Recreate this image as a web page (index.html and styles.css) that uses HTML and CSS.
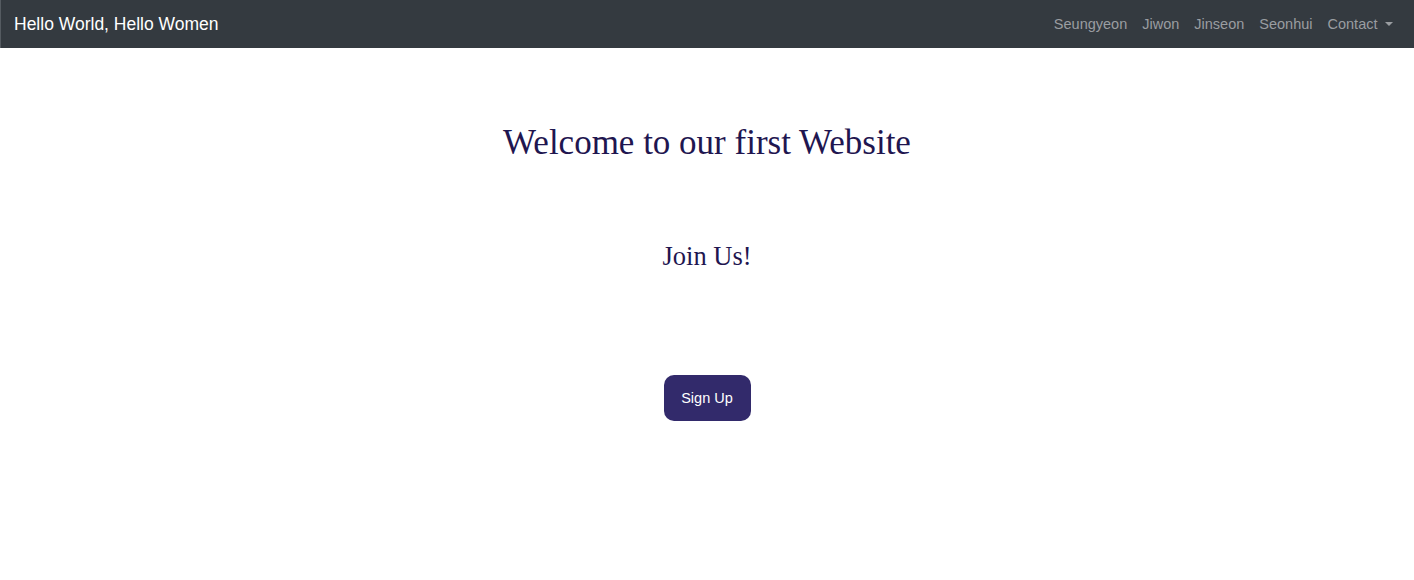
FILE: index.html
```html
<!DOCTYPE html>
<html lang="en">
<head>
<meta charset="utf-8">
<title>Hello World, Hello Women</title>
<link rel="stylesheet" href="styles.css">
</head>
<body>
<nav class="navbar">
  <a class="brand" href="#">Hello World, Hello Women</a>
  <ul class="nav">
    <li><a class="nav-link" href="#">Seungyeon</a></li>
    <li><a class="nav-link" href="#">Jiwon</a></li>
    <li><a class="nav-link" href="#">Jinseon</a></li>
    <li><a class="nav-link" href="#">Seonhui</a></li>
    <li><a class="nav-link dropdown" href="#">Contact<span class="caret"></span></a></li>
  </ul>
</nav>
<main class="hero">
  <h1 class="title">Welcome to our first Website</h1>
  <h2 class="subtitle">Join Us!</h2>
  <button class="btn">Sign Up</button>
</main>
</body>
</html>
```
FILE: styles.css
```css
* { box-sizing: border-box; }
html, body { margin: 0; padding: 0; background: #fff; }
body { font-family: "Liberation Sans", Arial, sans-serif; }
.navbar {
  height: 48px;
  background: #343a40;
  border-left: 1px solid #555b61;
  display: flex;
  align-items: center;
  justify-content: space-between;
  padding: 0 14px 0 13px;
}
.brand {
  color: #fff;
  text-decoration: none;
  font-size: 17.5px;
}
.nav {
  list-style: none;
  margin: 0;
  padding: 0;
  display: flex;
}
.nav-link {
  display: block;
  color: #9a9da1;
  text-decoration: none;
  font-size: 14.5px;
  padding: 8px 7.5px;
}
.caret {
  display: inline-block;
  margin-left: 7px;
  vertical-align: 3px;
  border-top: 4.5px solid #9a9da1;
  border-left: 4.5px solid transparent;
  border-right: 4.5px solid transparent;
}
.hero {
  display: flex;
  flex-direction: column;
  align-items: center;
}
.title {
  margin: 75px 0 0;
  font-family: "Liberation Serif", "Times New Roman", serif;
  font-weight: 400;
  font-size: 35px;
  color: #1f1650;
}
.subtitle {
  margin: 78px 0 0;
  font-family: "Liberation Serif", "Times New Roman", serif;
  font-weight: 400;
  font-size: 26.5px;
  color: #1f1650;
}
.btn {
  margin-top: 103px;
  width: 87px;
  height: 46px;
  border: none;
  border-radius: 10px;
  background: #322a6b;
  color: #fff;
  font-family: "Liberation Sans", Arial, sans-serif;
  font-size: 14.5px;
}
```
